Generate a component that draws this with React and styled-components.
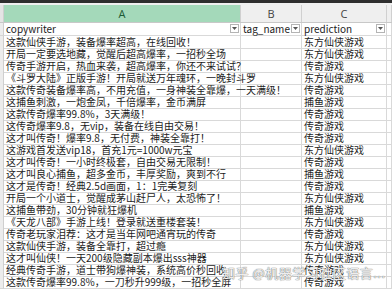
import styled, { createGlobalStyle } from 'styled-components';

const GlobalStyle = createGlobalStyle`
  html, body {
    margin: 0;
    padding: 0;
    background: #ffffff;
    overflow: hidden;
  }
  * {
    box-sizing: border-box;
  }
`;

const rows = [
  ['这款仙侠手游，装备爆率超高，在线回收！', '东方仙侠游戏'],
  ['开局一定要选地藏，觉醒后超高爆率，一招秒全场', '东方仙侠游戏'],
  ['传奇手游开启，热血来袭，超高爆率，你还不来试试？', '传奇游戏'],
  ['《斗罗大陆》正版手游！开局就送万年魂环，一晚封斗罗', '东方仙侠游戏'],
  ['这款传奇装备爆率高，不用充值，一身神装全靠爆，一天满级！', '传奇游戏'],
  ['这捕鱼刺激，一炮金凤，千倍爆率，金币满屏', '捕鱼游戏'],
  ['这款传奇爆率99.8%，3天满级！', '传奇游戏'],
  ['这传奇爆率9.8，无vip，装备在线自由交易！', '传奇游戏'],
  ['这才叫传奇！爆率9.8，无付费，神装全靠打！', '传奇游戏'],
  ['这游戏首发送vip18，首充1元=1000w元宝', '东方仙侠游戏'],
  ['这才叫传奇！一小时终极套，自由交易无限制！', '传奇游戏'],
  ['这才叫良心捕鱼，超多金币，丰厚奖励，爽到不行', '捕鱼游戏'],
  ['这才是传奇！经典2.5d画面，1：1完美复刻', '传奇游戏'],
  ['开局一个小道士，觉醒成茅山赶尸人，太恐怖了！', '东方仙侠游戏'],
  ['这捕鱼带劲，30分钟就狂爆机', '捕鱼游戏'],
  ['《天龙八部》手游上线！登录就送重楼套装！', '东方仙侠游戏'],
  ['传奇老玩家泪荐：这才是当年网吧通宵玩的传奇', '传奇游戏'],
  ['这款仙侠手游，装备全靠打，超过瘾', '东方仙侠游戏'],
  ['这才叫仙侠！一天200级隐藏副本爆出sss神器', '东方仙侠游戏'],
  ['经典传奇手游，道士带狗爆神装，系统高价秒回收', '传奇游戏'],
  ['这款传奇爆率99.8%，一刀秒升999级，一招秒全屏', '传奇游戏'],
];

const FilterButton = () => (
  <Filter>
    <svg width="5" height="3" viewBox="0 0 5 3">
      <path d="M0 0 L5 0 L2.5 3 Z" fill="#555" />
    </svg>
  </Filter>
);

const App = () => {
  return (
    <Sheet>
      <GlobalStyle />
      <TopBar />
      <HeaderRow>
        <Corner />
        <ColHeader selected>A</ColHeader>
        <ColHeader>B</ColHeader>
        <ColHeader>C</ColHeader>
        <ColHeader />
      </HeaderRow>
      <TitleRow>
        <RowHead />
        <Cell>
          copywriter
          <FilterButton />
        </Cell>
        <Cell>
          tag_name
          <FilterButton />
        </Cell>
        <Cell>
          prediction
          <FilterButton />
        </Cell>
        <Cell />
      </TitleRow>
      {rows.map(([text, tag], i) => (
        <Row key={i}>
          <RowHead />
          <Cell>{text}</Cell>
          <Cell />
          <Cell>{tag}</Cell>
          <Cell />
        </Row>
      ))}
      <Watermark>知乎 @机器学习社区语言...</Watermark>
    </Sheet>
  );
};

export default App;

const columns = '4px 237px 61px 85px 1fr';

const Sheet = styled.div`
  position: relative;
  width: 392px;
  height: 291px;
  overflow: hidden;
  font-family: 'Noto Sans CJK SC', sans-serif;
  color: #1c1c1c;
`;

const TopBar = styled.div`
  height: 3px;
  background: #2e2e2e;
`;

const HeaderRow = styled.div`
  display: grid;
  grid-template-columns: ${columns};
  height: 20px;
  padding-top: 2px;
  background: #efefef;
  border-bottom: 1px solid #c8c8c8;
`;

const Corner = styled.div`
  background: #e4e4e4;
  border-right: 1px solid #cfcfcf;
`;

const ColHeader = styled.div`
  display: flex;
  align-items: center;
  justify-content: center;
  font-family: 'Open Sans', 'Liberation Sans', sans-serif;
  font-size: 11px;
  color: ${(p) => (p.selected ? '#1d5a35' : '#444')};
  background: ${(p) => (p.selected ? '#a4d9ba' : 'transparent')};
  border-right: 1px solid #d0d0d0;
`;

const Row = styled.div`
  display: grid;
  grid-template-columns: ${columns};
  height: 12px;
`;

const TitleRow = styled(Row)`
  height: 13px;
`;

const RowHead = styled.div`
  background: #ececec;
  border-right: 1px solid #cfcfcf;
  border-bottom: 1px solid #d6d6d6;
`;

const Cell = styled.div`
  position: relative;
  display: flex;
  align-items: center;
  padding-left: 2px;
  font-size: 10px;
  line-height: 12px;
  white-space: nowrap;
  overflow: visible;
  border-right: 1px solid #d9d9d9;
  border-bottom: 1px solid #d9d9d9;
`;

const Filter = styled.span`
  position: absolute;
  right: 1px;
  top: 1px;
  width: 9px;
  height: 9px;
  display: flex;
  align-items: center;
  justify-content: center;
  background: #fff;
  border: 1px solid #b4b4b4;
`;

const Watermark = styled.div`
  position: absolute;
  left: 222px;
  top: 263px;
  font-size: 13px;
  letter-spacing: 0.5px;
  color: rgba(255, 255, 255, 0.9);
  text-shadow: 0 0 1px #6e6e6e, 0 0 1px #6e6e6e;
  white-space: nowrap;
`;
